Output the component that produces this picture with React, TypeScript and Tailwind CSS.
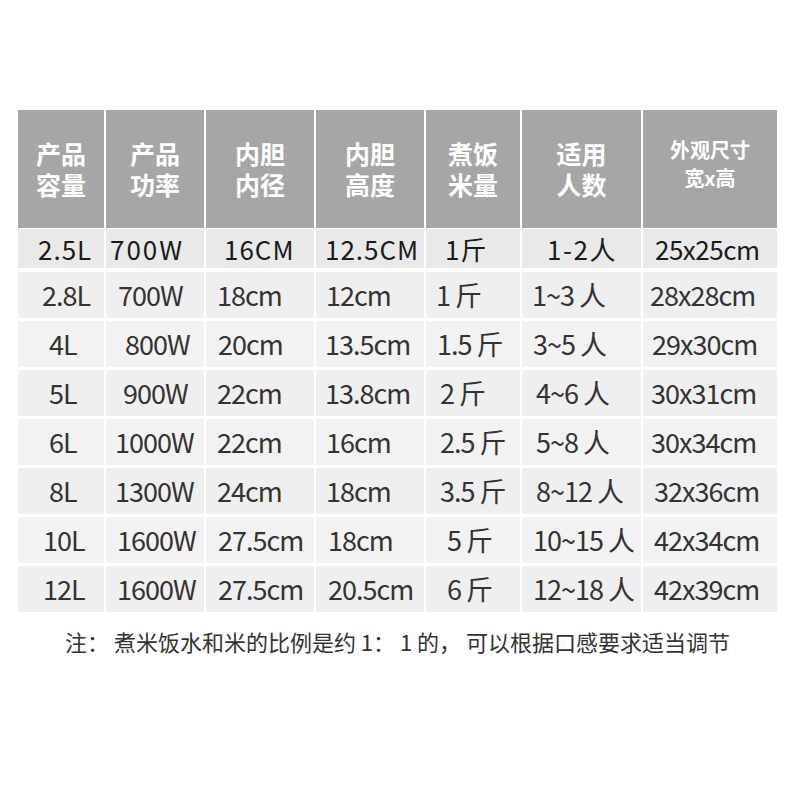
import React from "react";

type Cell = [string, string];

const header: string[][] = [
  ["产品", "容量"],
  ["产品", "功率"],
  ["内胆", "内径"],
  ["内胆", "高度"],
  ["煮饭", "米量"],
  ["适用", "人数"],
];

// text + left padding inside its column
const rows: { bg: string; cells: Cell[] }[] = [
  {
    bg: "bg-[#efefef]",
    cells: [
      ["2.8L", "pl-[24px]"],
      ["700W", "pl-[12px]"],
      ["18cm", "pl-[11px]"],
      ["12cm", "pl-[10px]"],
      ["1 斤", "pl-[10px]"],
      ["1~3 人", "pl-[10px]"],
      ["28x28cm", "pl-[7px]"],
    ],
  },
  {
    bg: "bg-[#f2f2f2]",
    cells: [
      ["4L", "pl-[31px]"],
      ["800W", "pl-[19px]"],
      ["20cm", "pl-[12px]"],
      ["13.5cm", "pl-[9px]"],
      ["1.5 斤", "pl-[11px]"],
      ["3~5 人", "pl-[11px]"],
      ["29x30cm", "pl-[9px]"],
    ],
  },
  {
    bg: "bg-[#efefef]",
    cells: [
      ["5L", "pl-[31px]"],
      ["900W", "pl-[17px]"],
      ["22cm", "pl-[11px]"],
      ["13.8cm", "pl-[9px]"],
      ["2 斤", "pl-[14px]"],
      ["4~6 人", "pl-[14px]"],
      ["30x31cm", "pl-[8px]"],
    ],
  },
  {
    bg: "bg-[#f2f2f2]",
    cells: [
      ["6L", "pl-[31px]"],
      ["1000W", "pl-[9px]"],
      ["22cm", "pl-[11px]"],
      ["16cm", "pl-[10px]"],
      ["2.5 斤", "pl-[14px]"],
      ["5~8 人", "pl-[14px]"],
      ["30x34cm", "pl-[8px]"],
    ],
  },
  {
    bg: "bg-[#efefef]",
    cells: [
      ["8L", "pl-[31px]"],
      ["1300W", "pl-[9px]"],
      ["24cm", "pl-[11px]"],
      ["18cm", "pl-[10px]"],
      ["3.5 斤", "pl-[14px]"],
      ["8~12 人", "pl-[14px]"],
      ["32x36cm", "pl-[11px]"],
    ],
  },
  {
    bg: "bg-[#f2f2f2]",
    cells: [
      ["10L", "pl-[25px]"],
      ["1600W", "pl-[11px]"],
      ["27.5cm", "pl-[12px]"],
      ["18cm", "pl-[12px]"],
      ["5 斤", "pl-[21px]"],
      ["10~15 人", "pl-[11px]"],
      ["42x34cm", "pl-[11px]"],
    ],
  },
  {
    bg: "bg-[#efefef]",
    cells: [
      ["12L", "pl-[25px]"],
      ["1600W", "pl-[11px]"],
      ["27.5cm", "pl-[12px]"],
      ["20.5cm", "pl-[12px]"],
      ["6 斤", "pl-[21px]"],
      ["12~18 人", "pl-[11px]"],
      ["42x39cm", "pl-[11px]"],
    ],
  },
];

// first row is set a little wider
const firstRow: Cell[] = [
  ["2.5L", "pl-[20px] tracking-[1px]"],
  ["700W", "pl-[4px] tracking-[2px]"],
  ["16CM", "pl-[18px] tracking-[1px]"],
  ["12.5CM", "pl-[9px] tracking-[1px]"],
  ["1斤", "pl-[19px] tracking-[1px]"],
  ["1-2人", "pl-[25px] tracking-[1.5px]"],
  ["25x25cm", "pl-[12px] tracking-[-0.5px]"],
];

const cols = "grid grid-cols-[86px_98px_108px_108px_94px_119px_134px] gap-x-[2px]";

export default function App() {
  return (
    <div className="w-[800px] h-[800px] bg-white font-['Noto_Sans_CJK_SC',sans-serif] pt-[110px] pl-[18px]">
      {/* header */}
      <div className={`${cols} h-[118px]`}>
        {header.map((h, i) => (
          <div
            key={i}
            className="bg-[#a6a6a6] flex flex-col items-center justify-center text-white text-[25px] leading-[31px] font-bold"
          >
            <span>{h[0]}</span>
            <span>{h[1]}</span>
          </div>
        ))}
        <div className="bg-[#a6a6a6] flex flex-col items-center justify-center text-white text-[20px] leading-[28px] font-bold pb-[10px]">
          <span>外观尺寸</span>
          <span>宽x高</span>
        </div>
      </div>

      {/* first row */}
      <div className={`${cols} h-[38px] mt-[1px]`}>
        {firstRow.map(([t, cls], i) => (
          <div
            key={i}
            className={`bg-[#e9e9e9] flex items-center text-[26px] text-[#1a1a1a] whitespace-pre ${cls}`}
          >
            {t}
          </div>
        ))}
      </div>

      <div className="flex flex-col gap-y-[3px] mt-[5px]">
        {rows.map((r, ri) => (
          <div key={ri} className={`${cols} h-[46px]`}>
            {r.cells.map(([t, pad], i) => (
              <div
                key={i}
                className={`${r.bg} flex items-center text-[27px] tracking-[-1px] text-[#333333] whitespace-pre ${pad}`}
              >
                {t}
              </div>
            ))}
          </div>
        ))}
      </div>

      <div className="w-[759px] mt-[14px] text-center text-[22px] text-[#333333] whitespace-pre leading-[30px]">
        {"注： 煮米饭水和米的比例是约 1： 1 的， 可以根据口感要求适当调节"}
      </div>
    </div>
  );
}
